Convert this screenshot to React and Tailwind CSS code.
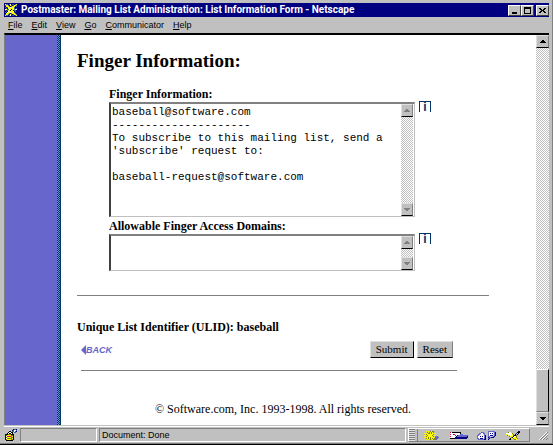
const palette = {
  k: "#000000",
  w: "#ffffff",
  g: "#808080",
  y: "#ffff00",
  o: "#808000",
  b: "#6666cc",
  n: "#000080",
  r: "#cc0033",
  c: "#ccccff",
  t: "#336699",
};

const icons = {
  netscape: [
    "ytt.tw.tt.ty",
    "tyyt.yt.tyyt",
    ".yyyt.tyyy.t",
    "t.tyywyyyt..",
    ".t.ywyyywt.t",
    "wyttyykyytyw",
    "t.tyykyyktt.",
    ".t.wyyyyw.t.",
    "t.yyywyyyt..",
    ".yyyt.tyyyt.",
    "tyyt.yt.tyyt",
    "ytt.tw.tt.ty",
  ],
  lock: [
    "........nttn",
    ".......ntwwt",
    "....kk.ttwtn",
    "...kwwkk.tt.",
    "..kwkkwk....",
    "nkkoookkn...",
    "noyyyyook...",
    "nwrrrroyk...",
    "noyyyyook...",
    "nwoooooyk...",
    "noyyyyook...",
    ".kkkkkkk....",
  ],
  navigator: [
    "..y.y.oyoo......",
    "...oyoyoyo......",
    "yyyyooyoyyyy....",
    "..oyyyyyyo......",
    "yyyoyyyyoyyy....",
    "..oyyyyyyo.bbb..",
    "yyyyoyoyyyybbbb.",
    "..oyoyoyo.obbb..",
    "..y.y.o.yoobb...",
  ],
  inbox: [
    "rwkkkkkkkkk.......",
    "wwwwwwwwwwk.......",
    "rwwrrwwwwwbbb.....",
    "wwwwwrwnbbbbbbbbbb",
    "rwwwwwnbbbbbbbbbbn",
    "wwwwwnnnnnnnnnnnnn",
    "kkkkknnnnnnnnnnnn.",
  ],
  newsgroups: [
    "...........bbbbbbb.",
    "....bbb....bwwwwcbn",
    "..bbwwbb...bwnwnwbn",
    ".bbcwwcb...bwwwwcbn",
    "bbwwwwwbn..bwnnncbn",
    "bwwnwnwbn..bbcccbn.",
    "bwwwwwwbn..nbbnnn..",
    "bbwnnncbn..bn......",
    ".bbbbbbnn..n.......",
  ],
  composer: [
    "............nn.",
    "..oww......nkk.",
    "wwwwwwo...nck..",
    "yywwwwyo.kck...",
    ".oyywyyokko....",
    "...oyyykwyo....",
    ".....okwyyo....",
    "....kcyoyyyo...",
    "...kk...ooyy...",
  ],
};

function PixelIcon({ name }) {
  const rows = icons[name];
  const width = Math.max(...rows.map((row) => row.length));
  return (
    <svg width={width} height={rows.length} shapeRendering="crispEdges" aria-hidden="true" className="shrink-0">
      {rows.map((row, y) =>
        [...row].map((dot, x) =>
          dot === "." ? null : <rect key={`${x}-${y}`} x={x} y={y} width="1" height="1" fill={palette[dot]} />
        )
      )}
    </svg>
  );
}

function Arrow({ down, color }) {
  return (
    <svg width="6" height="3" shapeRendering="crispEdges" aria-hidden="true">
      <path d={down ? "M0 0h6v1h-1v1h-1v1h-2v-1h-1v-1h-1z" : "M2 0h2v1h1v1h1v1h-6v-1h1v-1h1z"} fill={color} />
    </svg>
  );
}

function ScrollButton({ down, label, color = "#000000" }) {
  return (
    <button
      type="button"
      aria-label={label}
      className="flex h-[13px] w-full shrink-0 items-center justify-center border border-t-[#e0e0e0] border-l-[#e0e0e0] border-r-[#808080] border-b-black bg-[#c0c0c0]"
    >
      <Arrow down={down} color={color} />
    </button>
  );
}

function CaptionButton({ label, children }) {
  return (
    <button
      type="button"
      aria-label={label}
      className="flex h-[11px] w-[13px] items-center justify-center border border-t-white border-l-white border-r-[#404040] border-b-[#404040] bg-[#c0c0c0]"
    >
      <svg width="7" height="7" shapeRendering="crispEdges" fill="#000">
        {children}
      </svg>
    </button>
  );
}

function TextBox({ id, label, rows, value, info }) {
  return (
    <div>
      <label htmlFor={id} className="block text-[12px] leading-4 font-bold">
        {label}
      </label>
      <div className="flex items-start gap-1">
        <div className="flex min-w-0 flex-1 border border-t-2 border-l-2 border-t-[#808080] border-l-[#404040] border-r-[#c0c0c0] border-b-[#c0c0c0] pr-px">
          <textarea
            id={id}
            rows={rows}
            defaultValue={value}
            spellCheck={false}
            className="block min-w-0 flex-1 resize-none overflow-hidden pt-0.5 pb-1.5 pl-px font-['Liberation_Mono',monospace] text-[11px] leading-[13px] outline-none"
          />
          <div className="flex w-3 flex-col justify-between bg-[repeating-conic-gradient(#c0c0c0_0_25%,#fff_0_50%)] bg-[length:2px_2px]">
            <ScrollButton label={`Scroll ${label} up`} color="#808080" />
            <ScrollButton label={`Scroll ${label} down`} color="#808080" down />
          </div>
        </div>
        <a
          href="#info"
          aria-label={info}
          className="-mt-px flex h-[11px] w-3 items-center justify-center border border-b-0 border-[#003366] font-['Liberation_Sans',sans-serif] text-[12px] leading-[10px] font-bold text-[#003366]"
        >
          i
        </a>
      </div>
    </div>
  );
}

const menus = ["File", "Edit", "View", "Go", "Communicator", "Help"];

const fingerText = `baseball@software.com
---------------------
To subscribe to this mailing list, send a
'subscribe' request to:

baseball-request@software.com`;

export default function App() {
  return (
    <div className="flex min-h-screen flex-col border-b border-black bg-[#c0c0c0] font-['Liberation_Sans',sans-serif] text-black">
      <div className="flex flex-1 flex-col border-r border-b border-[#808080] pt-[3px] pr-[3px] pb-px pl-1">
        <header>
          <div className="flex h-[14px] items-center bg-[#000080] pl-px">
            <PixelIcon name="netscape" />
            <h1 className="min-w-0 flex-1 truncate pl-1 font-['Roboto',sans-serif] text-[10px] leading-[14px] font-bold text-white">
              Postmaster: Mailing List Administration: List Information Form - Netscape
            </h1>
            <div className="flex">
              <CaptionButton label="Minimize">
                <path d="M1 5h5v2h-5z" />
              </CaptionButton>
              <CaptionButton label="Maximize">
                <path d="M0 0h7v7h-7zM1 2v4h5v-4z" fillRule="evenodd" />
              </CaptionButton>
              <div className="w-0.5" />
              <CaptionButton label="Close">
                <path d="M0 1h2v1h1v1h1v-1h1v-1h2v1h-1v1h-1v1h1v1h1v1h-2v-1h-1v-1h-1v1h-1v1h-2v-1h1v-1h1v-1h-1v-1h-1z" />
              </CaptionButton>
            </div>
          </div>
          <nav className="flex h-4 items-center gap-[9px] pl-1 text-[9px] leading-4">
            {menus.map((menu) => (
              <button key={menu} type="button">
                <span className="underline">{menu[0]}</span>
                {menu.slice(1)}
              </button>
            ))}
          </nav>
        </header>

        <div className="flex flex-1 border-t-2 border-l border-t-black border-l-[#808080] bg-white">
          <aside className="w-13 bg-[#6666cc]" />
          <div className="w-[3px] bg-[repeating-conic-gradient(#003366_0_25%,#6699cc_0_50%)] bg-[length:2px_2px]" />
          <div className="w-px bg-[#003366]" />

          <main className="min-w-0 flex-1 pt-4 pr-[47px] pl-4 font-['Liberation_Serif',serif]">
            <h2 className="text-[19px] leading-5 font-bold">Finger Information:</h2>
            <form>
              <div className="flex flex-col gap-px pt-[15px] pr-[58px] pl-8">
                <TextBox id="finger" label="Finger Information:" rows={8} value={fingerText} info="About finger information" />
                <TextBox id="domains" label="Allowable Finger Access Domains:" rows={2} value="" info="About access domains" />
              </div>
              <hr className="mt-6 border-[#808080]" />
              <p className="mt-[23px] text-[12px] leading-4 font-bold">Unique List Identifier (ULID): baseball</p>
              <div className="mt-1.5 flex items-center justify-between pr-9 pl-1">
                <a
                  href="#back"
                  className="flex items-center font-['Liberation_Sans',sans-serif] text-[9px] leading-3 font-bold text-[#6666cc] italic"
                >
                  <svg width="5" height="10" fill="#6666cc" aria-hidden="true">
                    <path d="M0 5l5-5v10z" />
                  </svg>
                  BACK
                </a>
                <div className="flex gap-[3px] text-[11px] leading-[15px]">
                  <button type="submit" className="border border-t-[#e0e0e0] border-l-[#e0e0e0] border-r-black border-b-black bg-[#c0c0c0] px-[5px]">
                    Submit
                  </button>
                  <button type="reset" className="border border-t-[#e0e0e0] border-l-[#e0e0e0] border-r-[#808080] border-b-black bg-[#c0c0c0] px-[5px]">
                    Reset
                  </button>
                </div>
              </div>
            </form>
            <hr className="mt-3 mr-8 ml-1 border-[#808080]" />
            <footer className="pt-[30px] pb-1.5 text-center text-[12px] leading-4">
              © Software.com, Inc. 1993-1998. All rights reserved.
            </footer>
          </main>

          <div className="flex w-[13px] flex-col bg-[repeating-conic-gradient(#c0c0c0_0_25%,#fff_0_50%)] bg-[length:2px_2px]">
            <ScrollButton label="Scroll page up" />
            <div className="flex-1" />
            <div className="h-[43px] border border-t-white border-l-[#e0e0e0] border-r-black border-b-[#808080] bg-[#c0c0c0]" />
            <ScrollButton label="Scroll page down" down />
          </div>
        </div>

        <footer className="mt-px flex h-4 items-stretch gap-0.5 border-t border-white pt-px text-[9px] leading-3">
          <button type="button" aria-label="Security" className="flex w-[14px] items-center justify-center">
            <PixelIcon name="lock" />
          </button>
          <div className="w-[77px] border border-t-[#808080] border-l-[#808080] border-r-white border-b-white" />
          <div className="min-w-0 flex-1 border border-t-[#808080] border-l-[#808080] border-r-white border-b-white pl-0.5">
            Document: Done
          </div>
          <div className="flex w-[122px] items-center border border-t-white border-l-white border-r-[#808080] border-b-[#808080]">
            <div className="mr-1.5 h-3 w-[9px] border-r border-[#808080] bg-[repeating-linear-gradient(#808080_0_1px,#e0e0e0_1px_2px)] bg-[length:6px_100%] bg-no-repeat" />
            <div className="flex flex-1 items-center justify-between pr-2">
              <button type="button" aria-label="Navigator">
                <PixelIcon name="navigator" />
              </button>
              <button type="button" aria-label="Inbox">
                <PixelIcon name="inbox" />
              </button>
              <button type="button" aria-label="Newsgroups">
                <PixelIcon name="newsgroups" />
              </button>
              <button type="button" aria-label="Composer">
                <PixelIcon name="composer" />
              </button>
            </div>
          </div>
          <div className="flex w-[17px] items-end justify-end pb-0.5">
            <svg width="10" height="9" stroke="#808080" aria-hidden="true">
              <path d="M1 9l8-8M4 9l5-5M7 9l2-2" />
              <path d="M0 9l8-8M3 9l6-6" stroke="#fff" />
            </svg>
          </div>
        </footer>
      </div>
    </div>
  );
}
